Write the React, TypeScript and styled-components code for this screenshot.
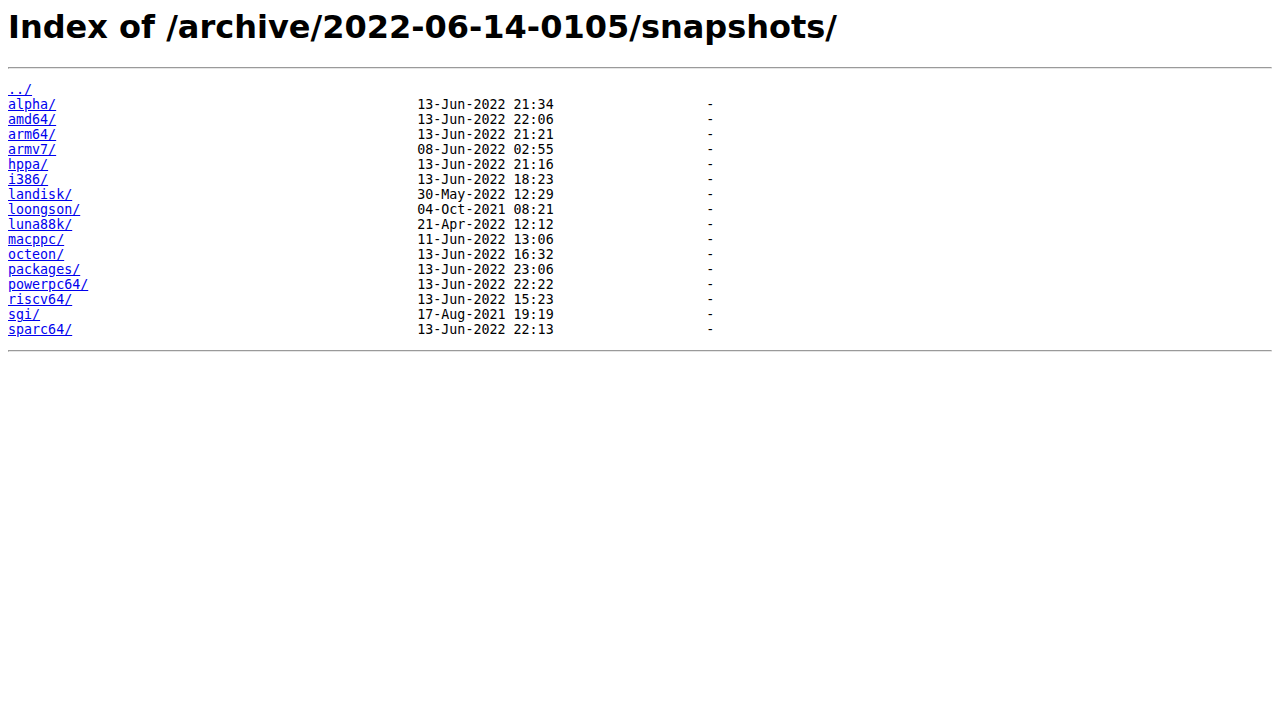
import React from "react";
import styled, { createGlobalStyle } from "styled-components";

const GlobalStyle = createGlobalStyle`
  html { background: #ffffff; }
  body {
    margin: 8px;
    font-family: "DejaVu Sans", sans-serif;
    color: #000000;
    background: #ffffff;
  }
`;

const Title = styled.h1`
  font-family: "DejaVu Sans", sans-serif;
  font-size: 32px;
  font-weight: bold;
  margin: 0 0 21.44px 0;
`;

const Rule = styled.hr`
  margin: 8px auto;
  border-style: solid;
  border-width: 1px;
  border-color: #9a9a9a #e6e6e6 #e6e6e6 #9a9a9a;
  height: 0;
  overflow: hidden;
`;

const Listing = styled.pre`
  margin: 13px 0;
  font-family: "DejaVu Sans Mono", monospace;
  font-size: 13.333px;
  line-height: 15px;
  white-space: pre;
`;

const Row = styled.div`
  display: block;
  height: 15px;
`;

const EntryLink = styled.a`
  color: #0000ee;
  text-decoration: underline;
`;

type Entry = { name: string; date: string; size: string };

const entries: Entry[] = [
  { name: "alpha/", date: "13-Jun-2022 21:34", size: "-" },
  { name: "amd64/", date: "13-Jun-2022 22:06", size: "-" },
  { name: "arm64/", date: "13-Jun-2022 21:21", size: "-" },
  { name: "armv7/", date: "08-Jun-2022 02:55", size: "-" },
  { name: "hppa/", date: "13-Jun-2022 21:16", size: "-" },
  { name: "i386/", date: "13-Jun-2022 18:23", size: "-" },
  { name: "landisk/", date: "30-May-2022 12:29", size: "-" },
  { name: "loongson/", date: "04-Oct-2021 08:21", size: "-" },
  { name: "luna88k/", date: "21-Apr-2022 12:12", size: "-" },
  { name: "macppc/", date: "11-Jun-2022 13:06", size: "-" },
  { name: "octeon/", date: "13-Jun-2022 16:32", size: "-" },
  { name: "packages/", date: "13-Jun-2022 23:06", size: "-" },
  { name: "powerpc64/", date: "13-Jun-2022 22:22", size: "-" },
  { name: "riscv64/", date: "13-Jun-2022 15:23", size: "-" },
  { name: "sgi/", date: "17-Aug-2021 19:19", size: "-" },
  { name: "sparc64/", date: "13-Jun-2022 22:13", size: "-" },
];

const ListingRow: React.FC<{ entry: Entry }> = ({ entry }) => (
  <Row>
    <EntryLink href={entry.name}>{entry.name}</EntryLink>
    {" ".repeat(Math.max(1, 51 - entry.name.length))}
    {entry.date}
    {entry.size.padStart(20, " ")}
  </Row>
);

export default function App() {
  return (
    <>
      <GlobalStyle />
      <Title>Index of /archive/2022-06-14-0105/snapshots/</Title>
      <Rule />
      <Listing>
        <Row>
          <EntryLink href="../">../</EntryLink>
        </Row>
        {entries.map((e) => (
          <ListingRow key={e.name} entry={e} />
        ))}
      </Listing>
      <Rule />
    </>
  );
}
